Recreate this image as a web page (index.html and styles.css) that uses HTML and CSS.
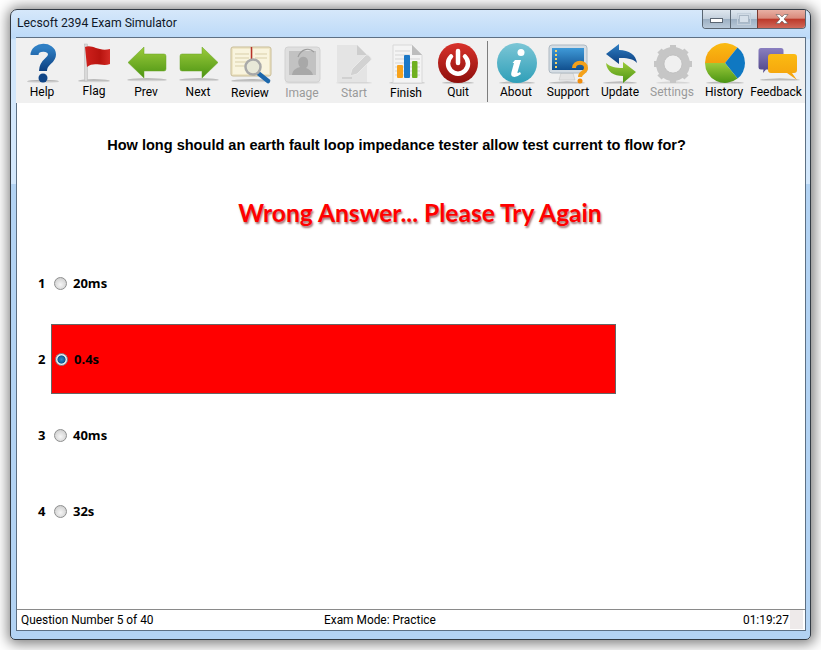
FILE: index.html
```html
<!DOCTYPE html>
<html lang="en">
<head>
    <meta charset="UTF-8">
    <title>Lecsoft 2394 Exam Simulator</title>
    <link rel="stylesheet" href="styles.css">
</head>
<body>
    <!-- shared gradients for the toolbar icons -->
    <svg class="defs" width="0" height="0">
        <defs>
            <linearGradient id="green" x1="0" y1="0" x2="0" y2="1"><stop offset="0" stop-color="#9ccb3b"/><stop offset="1" stop-color="#4b9413"/></linearGradient>
            <linearGradient id="blue" x1="0" y1="0" x2="0" y2="1"><stop offset="0" stop-color="#2f7fc4"/><stop offset="1" stop-color="#0c3f80"/></linearGradient>
            <linearGradient id="flagred" x1="0" y1="0" x2="1" y2="0"><stop offset="0" stop-color="#cf211d"/><stop offset=".6" stop-color="#b8140f"/><stop offset="1" stop-color="#d42c26"/></linearGradient>
            <linearGradient id="quitred" x1="0" y1="0" x2="0" y2="1"><stop offset="0" stop-color="#d8322b"/><stop offset="1" stop-color="#8e0f0c"/></linearGradient>
            <linearGradient id="teal" x1="0" y1="0" x2="0" y2="1"><stop offset="0" stop-color="#7cc6d6"/><stop offset="1" stop-color="#2f9fb8"/></linearGradient>
            <linearGradient id="screen" x1="0" y1="0" x2="0" y2="1"><stop offset="0" stop-color="#3f9ad8"/><stop offset="1" stop-color="#11508f"/></linearGradient>
            <linearGradient id="orange" x1="0" y1="0" x2="0" y2="1"><stop offset="0" stop-color="#fbbb12"/><stop offset="1" stop-color="#f4a00c"/></linearGradient>
            <linearGradient id="purple" x1="0" y1="0" x2="0" y2="1"><stop offset="0" stop-color="#8a7fc0"/><stop offset="1" stop-color="#4f4588"/></linearGradient>
            <linearGradient id="shade" x1="0" y1="0" x2="0" y2="1"><stop offset="0" stop-color="#888" stop-opacity=".75"/><stop offset="1" stop-color="#888" stop-opacity="0"/></linearGradient>
        </defs>
    </svg>

    <div class="window">
        <!-- Title Bar -->
        <div class="titlebar">
            <span class="title">Lecsoft 2394 Exam Simulator</span>
            <div class="caption">
                <div class="cap-btn cap-min"><span></span></div>
                <div class="cap-btn cap-max"><span></span></div>
                <div class="cap-btn cap-close">
                    <svg width="20" height="12" viewBox="0 0 20 12"><path d="M4 1.5h3.6L10 4l2.4-2.5H16L12 6l4 4.5h-3.6L10 8l-2.4 2.5H4L8 6z" fill="#fff" stroke="#5b5b5b" stroke-width=".6"/></svg>
                </div>
            </div>
        </div>

        <div class="client">
            <!-- Toolbar -->
            <div class="toolbar">
                <div class="tool">
                    <svg width="52" height="46" viewBox="0 0 52 46">
                        <ellipse cx="27" cy="41.5" rx="16" ry="1.8" fill="url(#shade)"/>
                        <path d="M18.5 15C18.5 5.500 36 5.500 36 14.500C36 21.500 27 21 27 31" fill="none" stroke="url(#blue)" stroke-width="8"/>
                        <circle cx="27" cy="38" r="4.500" fill="#0f4587"/>
                    </svg>
                    <span>Help</span>
                </div>
                <div class="tool up">
                    <svg width="52" height="46" viewBox="0 0 52 46">
                        <ellipse cx="26" cy="41" rx="16" ry="1.800" fill="url(#shade)"/>
                        <rect x="16.500" y="4" width="3" height="37" fill="#d9d9d9" stroke="#b5b5b5" stroke-width=".5"/>
                        <path d="M17 7C25 4 30 12 42 9L42 24C34 27 26 21 19 27Z" fill="url(#flagred)"/>
                    </svg>
                    <span>Flag</span>
                </div>
                <div class="tool">
                    <svg width="52" height="46" viewBox="0 0 52 46">
                        <ellipse cx="27" cy="40" rx="20" ry="1.800" fill="url(#shade)"/>
                        <path d="M8 22.500L24 7V14H44Q46 14 46 16V29Q46 31 44 31H24V38Z" fill="url(#green)" stroke="#6aa626" stroke-width=".5" stroke-linejoin="round"/>
                    </svg>
                    <span>Prev</span>
                </div>
                <div class="tool">
                    <svg width="52" height="46" viewBox="0 0 52 46">
                        <ellipse cx="27" cy="40" rx="20" ry="1.800" fill="url(#shade)"/>
                        <path d="M46 22.500L30 7V14H10Q8 14 8 16V29Q8 31 10 31H30V38Z" fill="url(#green)" stroke="#6aa626" stroke-width=".5" stroke-linejoin="round"/>
                    </svg>
                    <span>Next</span>
                </div>
                <div class="tool down">
                    <svg width="52" height="46" viewBox="0 0 52 46">
                        <ellipse cx="27" cy="41" rx="20" ry="1.800" fill="url(#shade)"/>
                        <rect x="7" y="7" width="40" height="29" rx="2" fill="#efe6c6" stroke="#c9bd97"/>
                        <rect x="9" y="9" width="18" height="25" fill="#f9f4de"/>
                        <rect x="29" y="9" width="16" height="25" fill="#f9f4de"/>
                        <path d="M11 14h14M11 18h14M11 22h14M11 26h10M31 14h12M31 18h12" stroke="#d9cfa9"/>
                        <path d="M27.500 7V24" stroke="#b8322a" stroke-width="1.500"/>
                        <path d="M34 33L44 41" stroke="#1d68ac" stroke-width="4.500" stroke-linecap="round"/>
                        <circle cx="29" cy="27" r="7.500" fill="#e8e8d8" stroke="#a9a9a9" stroke-width="2.500"/>
                    </svg>
                    <span>Review</span>
                </div>
                <div class="tool down off">
                    <svg width="52" height="46" viewBox="0 0 52 46">
                        <ellipse cx="27" cy="43" rx="18" ry="1.500" fill="url(#shade)" opacity=".5"/>
                        <rect x="9" y="7" width="35" height="35" rx="3" fill="#dfdfdf" stroke="#d2d2d2"/>
                        <rect x="13" y="11" width="27" height="24" fill="#c2c2c2"/>
                        <path d="M16 35C17 29 21 28 24 27C21 23 22 18 26 17C30 16 33 19 32 24C32 26 31 27 30 28C33 29 36 31 37 35Z" fill="#a8a8a8"/>
                        <path d="M22 17C25 9 33 7 38 12" fill="none" stroke="#9c9c9c" stroke-width="1.200"/>
                    </svg>
                    <span>Image</span>
                </div>
                <div class="tool down off">
                    <svg width="52" height="46" viewBox="0 0 52 46">
                        <ellipse cx="26" cy="43" rx="18" ry="1.500" fill="url(#shade)" opacity=".5"/>
                        <path d="M9 5H29L39 15V42H9Z" fill="#e4e4e4"/>
                        <path d="M29 5V15H39Z" fill="#cdcdcd"/>
                        <path d="M22 36L24 29L38 15C40 14 44 18 43 20L29 34Z" fill="#d2d2d2" stroke="#e9e9e9"/>
                        <path d="M14 38H24" stroke="#bdbdbd"/>
                    </svg>
                    <span>Start</span>
                </div>
                <div class="tool down">
                    <svg width="52" height="46" viewBox="0 0 52 46">
                        <ellipse cx="27" cy="43" rx="18" ry="1.500" fill="url(#shade)"/>
                        <path d="M13 5H32L42 15V43H13Z" fill="#f4f4f4" stroke="#d8d8d8"/>
                        <path d="M32 5V15H42Z" fill="#bdbdbd"/>
                        <path d="M15 11H30M15 15H30M15 19H40M15 23H40M15 27H40M15 31H40M15 35H40" stroke="#d5d5d5"/>
                        <rect x="17" y="25" width="6" height="13" rx="1" fill="#f7a21b"/>
                        <rect x="24" y="15" width="6" height="23" rx="1" fill="#1c78c6"/>
                        <rect x="32" y="21" width="5.500" height="17" rx="1" fill="#6fb01f"/>
                    </svg>
                    <span>Finish</span>
                </div>
                <div class="tool">
                    <svg width="52" height="46" viewBox="0 0 52 46">
                        <ellipse cx="26" cy="43" rx="16" ry="1.500" fill="url(#shade)"/>
                        <circle cx="26" cy="23" r="20" fill="url(#quitred)"/>
                        <path d="M19 16.500A10 10 0 1 0 33 16.500" fill="none" stroke="#fff" stroke-width="4.500" stroke-linecap="round"/>
                        <path d="M26 11V23" stroke="#fff" stroke-width="4.500" stroke-linecap="round"/>
                    </svg>
                    <span>Quit</span>
                </div>

                <div class="tool-sep"></div>

                <div class="tool">
                    <svg width="52" height="46" viewBox="0 0 52 46">
                        <ellipse cx="27" cy="43" rx="18" ry="1.500" fill="url(#shade)"/>
                        <circle cx="27" cy="23" r="20" fill="url(#teal)"/>
                        <circle cx="31" cy="12.500" r="3.500" fill="#fff"/>
                        <path d="M25 20H31L27.500 32Q27 34 30 32L31 34Q26 38 22.500 36.500Q20.500 35.500 21.500 32L24 23H22.500Z" fill="#fff"/>
                    </svg>
                    <span>About</span>
                </div>
                <div class="tool">
                    <svg width="52" height="46" viewBox="0 0 52 46">
                        <ellipse cx="25" cy="43" rx="18" ry="1.500" fill="url(#shade)"/>
                        <path d="M19 33H31L33 40H17Z" fill="#e3e3e3" stroke="#bfbfbf" stroke-width=".5"/>
                        <rect x="7" y="5" width="38" height="28" rx="3" fill="#d5dde4" stroke="#aeb9c2"/>
                        <rect x="10" y="8" width="32" height="22" fill="url(#screen)"/>
                        <path d="M13 11h2M13 15h2M13 19h2M13 23h2M13 27h2" stroke="#f5d36a" stroke-width="2"/>
                        <path d="M32 28C32 21 44 21 44 28C44 33 38 32 38 37" fill="none" stroke="#f4a11a" stroke-width="4"/>
                        <circle cx="38" cy="41" r="2.500" fill="#f08c0c"/>
                    </svg>
                    <span>Support</span>
                </div>
                <div class="tool">
                    <svg width="52" height="46" viewBox="0 0 52 46">
                        <ellipse cx="26" cy="43" rx="17" ry="1.500" fill="url(#shade)"/>
                        <path d="M12 14L25 4V10C35 10 42 15 43 23C38 18 32 18 25 18V24Z" fill="url(#blue)"/>
                        <path d="M42 32L29 43V36C20 36 13 32 12 23C16 27 22 28 29 28V22Z" fill="url(#green)"/>
                    </svg>
                    <span>Update</span>
                </div>
                <div class="tool off">
                    <svg width="52" height="46" viewBox="0 0 52 46">
                        <ellipse cx="27" cy="43" rx="17" ry="1.500" fill="url(#shade)" opacity=".5"/>
                        <circle cx="27" cy="24" r="13" fill="none" stroke="#c6c6c6" stroke-width="8"/>
                        <path d="M27 5V43M8 24H46M13.500 10.500L40.500 37.500M40.500 10.500L13.500 37.500" stroke="#c6c6c6" stroke-width="6"/>
                        <circle cx="27" cy="24" r="9" fill="#f0f0f0" stroke="#b5b5b5" stroke-width=".6"/>
                    </svg>
                    <span>Settings</span>
                </div>
                <div class="tool">
                    <svg width="52" height="46" viewBox="0 0 52 46">
                        <ellipse cx="27" cy="43" rx="19" ry="1.500" fill="url(#shade)"/>
                        <path d="M27 23L7 23A20 20 0 0 1 39.500 7.400Z" fill="url(#orange)"/>
                        <path d="M27 23L39.500 7.400A20 20 0 0 1 39.500 38.600Z" fill="#0f78c2"/>
                        <path d="M27 23L39.500 38.600A20 20 0 0 1 7 23Z" fill="url(#green)"/>
                    </svg>
                    <span>History</span>
                </div>
                <div class="tool">
                    <svg width="52" height="46" viewBox="0 0 52 46">
                        <ellipse cx="30" cy="40" rx="20" ry="1.500" fill="url(#shade)"/>
                        <path d="M11 8H31Q33.500 8 33.500 10.500V27Q33.500 29.500 31 29.500H16L13 33L13.500 29.500H11Q8.500 29.500 8.500 27V10.500Q8.500 8 11 8Z" fill="url(#purple)"/>
                        <path d="M21 14H44Q47 14 47 17V30Q47 33 44 33H42L47 40L37 33H21Q18 33 18 30V17Q18 14 21 14Z" fill="url(#orange)"/>
                    </svg>
                    <span>Feedback</span>
                </div>
            </div>

            <!-- Question Area -->
            <div class="content">
                <h1 class="question">How long should an earth fault loop impedance tester allow test current to flow for?</h1>
                <div class="result">Wrong Answer... Please Try Again</div>

                <div class="answers">
                    <div class="answer">
                        <span class="num">1</span>
                        <div class="option"><span class="radio"></span><span>20ms</span></div>
                    </div>
                    <div class="answer">
                        <span class="num">2</span>
                        <div class="option wrong"><span class="radio checked"></span><span>0.4s</span></div>
                    </div>
                    <div class="answer">
                        <span class="num">3</span>
                        <div class="option"><span class="radio"></span><span>40ms</span></div>
                    </div>
                    <div class="answer">
                        <span class="num">4</span>
                        <div class="option"><span class="radio"></span><span>32s</span></div>
                    </div>
                </div>
            </div>

            <!-- Status Bar -->
            <div class="statusbar">
                <span>Question Number 5 of 40</span>
                <span>Exam Mode: Practice</span>
                <span>01:19:27</span>
                <div class="grip"></div>
            </div>
        </div>
    </div>
</body>
</html>
```

FILE: styles.css
```css
body {
    margin: 0;
    padding: 9px 10px 0;
    background: #fff;
    font-family: Roboto, 'Open Sans', sans-serif;
    color: #000;
    height: 650px;
    box-sizing: border-box;
    overflow: hidden;
}

.defs {
    display: block;
}

.window {
    width: 801px;
    height: 631px;
    box-sizing: border-box;
    border: 1px solid #333b44;
    border-radius: 7px 7px 5px 5px;
    background: linear-gradient(to bottom, #d6e8fa 0, #bcdaf8 28px, #d3e7fb 30px, #d3e7fb 174px, #b3d3f3 174px, #b3d3f3 100%);
    box-shadow: 1px 1px 13px 3px rgba(0, 0, 0, 0.5);
    display: flex;
    flex-direction: column;
}

.titlebar {
    height: 27px;
    flex-shrink: 0;
    display: flex;
    justify-content: space-between;
    align-items: flex-start;
    padding: 0 4px 0 6px;
}

.title {
    font-size: 12.2px;
    line-height: 26px;
    color: #101828;
}

.caption {
    display: flex;
    height: 18px;
    border: 1px solid #5a6672;
    border-top: none;
    border-radius: 0 0 4px 4px;
    overflow: hidden;
}

.cap-btn {
    display: flex;
    align-items: center;
    justify-content: center;
    background: linear-gradient(to bottom, #dfe7ef 0, #c2cfdc 50%, #9cafc2 51%, #b9c9d9 100%);
}

.cap-min {
    width: 27px;
    border-right: 1px solid #5a6672;
}

.cap-min span {
    width: 11px;
    height: 3px;
    margin-top: 3px;
    background: #fff;
    border: 1px solid #5b6673;
}

.cap-max {
    width: 26px;
}

.cap-max span {
    width: 8px;
    height: 6px;
    background: #d6e0ea;
    border: 1px solid #aab8c6;
    outline: 1px solid #c4d0dc;
    outline-offset: 1px;
}

.cap-close {
    width: 47px;
    border-left: 1px solid #7a3a30;
    background: linear-gradient(to bottom, #e8b0a4 0, #d98a7c 45%, #bd3a2b 52%, #d0695a 100%);
}

.client {
    flex: 1;
    margin: 0 4px 8px 5px;
    border: 1px solid #5d7084;
    background: #fff;
    display: flex;
    flex-direction: column;
    min-height: 0;
}

.toolbar {
    height: 63px;
    margin-left: -1px;
    padding-top: 2px;
    background: #f0f0f0;
    display: flex;
    flex-shrink: 0;
}

.tool {
    width: 52px;
    display: flex;
    flex-direction: column;
    align-items: center;
    font-size: 12px;
    line-height: 14px;
    white-space: nowrap;
}

.tool svg {
    display: block;
}

.tool span {
    margin-top: -1px;
}

.tool.up span {
    margin-top: -2px;
}

.tool.down span {
    margin-top: 0;
}

.tool.off {
    color: #9a9a9a;
}

.tool-sep {
    width: 1px;
    height: 61px;
    margin: 1px 2px 0 3px;
    background: #7d7d7d;
}

.content {
    flex: 1;
    min-height: 0;
}

.question {
    margin: 0;
    padding: 33px 29px 0 0;
    font-family: 'Liberation Sans', sans-serif;
    font-size: 14.55px;
    line-height: 18px;
    font-weight: bold;
    text-align: center;
}

.result {
    margin-top: 42px;
    padding-left: 18px;
    height: 42px;
    font-family: Lato, sans-serif;
    font-size: 24.6px;
    line-height: 34px;
    font-weight: 700;
    text-align: center;
    color: #ff0000;
    text-shadow: 1px 2px 2px rgba(90, 0, 0, 0.55);
}

.answers {
    margin-top: 7px;
}

.answer {
    height: 76px;
    display: flex;
    align-items: center;
    padding-left: 21px;
    font-family: 'Open Sans', sans-serif;
    font-size: 13px;
    font-weight: 700;
}

.num {
    width: 13px;
}

.option {
    width: 565px;
    height: 70px;
    box-sizing: border-box;
    border: 1px solid transparent;
    display: flex;
    align-items: center;
    gap: 6px;
    padding-left: 1px;
}

.option.wrong {
    background: #ff0000;
    border-color: #666;
    padding-left: 2px;
}

.radio {
    width: 13px;
    height: 13px;
    margin-left: 1px;
    border-radius: 50%;
    box-sizing: border-box;
    border: 1px solid #8e8f8f;
    background: radial-gradient(circle at 50% 60%, #f6f6f6 0, #d4d4d4 70%, #bbb 100%);
}

.radio.checked {
    border: 1px solid #7a8a96;
    background: radial-gradient(circle, #2f8ac6 0, #0f5c94 48%, #dfe6ea 56%, #f5f5f5 100%);
}

.statusbar {
    height: 21px;
    flex-shrink: 0;
    border-top: 1px solid #8a8a8a;
    display: grid;
    grid-template-columns: 303px 419px 1fr auto;
    align-items: center;
    padding: 0 0 1px 4px;
    box-sizing: border-box;
    font-size: 11.9px;
    line-height: 18px;
}

.grip {
    width: 13px;
    height: 19px;
    margin-right: 2px;
    background: #eeeaea;
}
```
